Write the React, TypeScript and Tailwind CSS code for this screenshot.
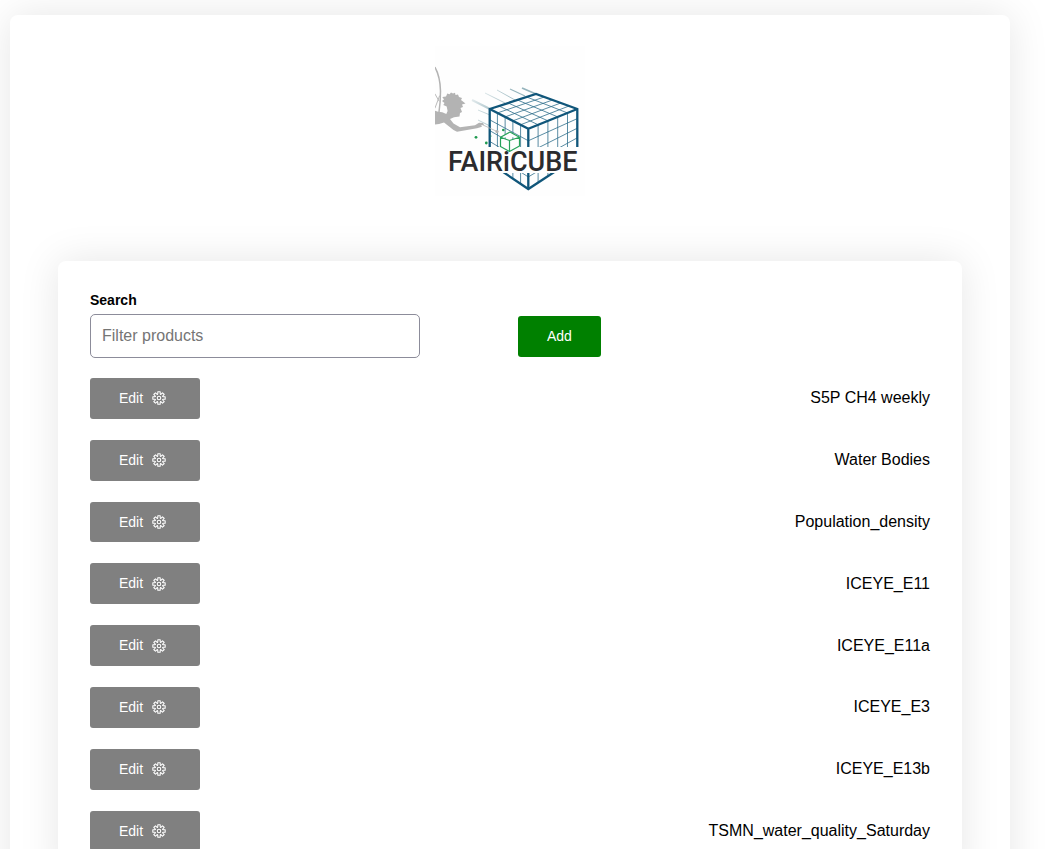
const products = [
  "S5P CH4 weekly",
  "Water Bodies",
  "Population_density",
  "ICEYE_E11",
  "ICEYE_E11a",
  "ICEYE_E3",
  "ICEYE_E13b",
  "TSMN_water_quality_Saturday",
];

type Point = [number, number];

const mix = (a: Point, b: Point, t: number): Point => [
  a[0] + (b[0] - a[0]) * t,
  a[1] + (b[1] - a[1]) * t,
];

/** Grid lines dividing a quadrilateral face into 5 × 5 cells. */
function faceGrid(a: Point, b: Point, c: Point, d: Point): string {
  return [0.2, 0.4, 0.6, 0.8]
    .map((t) => {
      const lines = [
        [mix(a, b, t), mix(d, c, t)],
        [mix(a, d, t), mix(b, c, t)],
      ];
      return lines.map(([p, q]) => `M${p.join(" ")}L${q.join(" ")}`).join("");
    })
    .join("");
}

const back: Point = [101, 48];
const left: Point = [54.7, 63];
const right: Point = [142.3, 63];
const front: Point = [93.3, 82.7];
const bottom: Point = [93.3, 143];
const leftLow: Point = [54.7, 117];
const rightLow: Point = [142.3, 111];

/** Outline of an eight-toothed gear centred in a 24 × 24 box. */
const gearOutline =
  Array.from({ length: 8 }, (_, k) =>
    (
      [
        [8, -15],
        [10.8, -11],
        [10.8, 11],
        [8, 15],
        [6.6, 22.5],
      ] as Point[]
    ).map(([radius, offset]) => {
      const angle = ((k * 45 + offset) * Math.PI) / 180;
      return `${(12 + radius * Math.cos(angle)).toFixed(2)} ${(12 + radius * Math.sin(angle)).toFixed(2)}`;
    }),
  )
    .flat()
    .map((p, i) => (i === 0 ? "M" : "L") + p)
    .join("") + "Z";

function GearIcon() {
  return (
    <svg
      viewBox="0 0 24 24"
      className="size-[14px] shrink-0"
      fill="none"
      stroke="currentColor"
      strokeWidth="1.8"
      strokeLinejoin="round"
      aria-hidden="true"
    >
      <path d={gearOutline} />
      <circle cx="12" cy="12" r="3" />
    </svg>
  );
}

function Logo() {
  return (
    <svg viewBox="0 0 150 150" className="size-[150px]" role="img" aria-label="FAIRiCUBE">
      <defs>
        <linearGradient id="streak" gradientUnits="userSpaceOnUse" x1="38" y1="40" x2="68" y2="60">
          <stop offset="0" stopColor="#4f8290" stopOpacity="0.05" />
          <stop offset="1" stopColor="#4f8290" stopOpacity="0.6" />
        </linearGradient>
      </defs>
      <rect width="150" height="150" fill="#fefefe" />
      <g fill="none" stroke="url(#streak)" strokeWidth="0.8">
        <path d="M87 42L101 48" strokeWidth="1.8" />
        <path d="M75 43L90 50" strokeWidth="1.2" />
        <path d="M62 44L80 54M50 47L70 57M43 64L55 69M43 74L55 80" />
        <path d="M37 54L55 63" strokeWidth="2" />
      </g>
      <g fill="none" stroke="#2f6f8c" strokeWidth="0.8">
        <path d={faceGrid(left, back, right, front)} />
        <path d={faceGrid(left, front, bottom, leftLow)} />
        <path d={faceGrid(front, right, rightLow, bottom)} />
      </g>
      <g fill="none" stroke="#10567a" strokeWidth="2.3" strokeLinejoin="miter">
        <path d="M54.7 63L101 48L142.3 63V111L93.3 143L54.7 117Z" />
        <path d="M54.7 63L93.3 82.7L142.3 63M93.3 82.7V143" />
      </g>
      <g fill="none" stroke="#b3b3b3" strokeLinecap="round">
        <path d="M0 21.500Q5 30 5.500 45Q5.500 56 4 66" strokeWidth="1.5" />
        <path d="M0 48L4 55M0 62L4.500 50" strokeWidth="0.9" />
        <path d="M48 79L61 85" strokeWidth="0.8" />
      </g>
      <g fill="#b3b3b3">
        <path d="M0 64.700L3 65.700L7.300 66.300L11.300 68L12.600 65L11.700 60.500L8.300 59L9.500 57L7 55L9 53.500L7.300 51L11 50.500L12.300 47.500L14.500 48.300L16 46.500L18 47.500L20 46.800L20.500 49L23 48.500L24 51L27 52L26 54L30.500 57.500L27 58.500L28 61L25.500 62L27 66L25 67L24.500 70.500L19 71.200L15 73L18.500 77.500L25 81.300L40 79.300L44 76.800L48 77L49 78.800L46 79.500L47 80.800L42 82.200L32 84L22 85.700L18.500 84L9 76.500L4 78L0 78.500Z" />
        <circle cx="62" cy="85.500" r="1.600" />
      </g>
      <rect x="10" y="101" width="140" height="26" fill="#fefefe" />
      <path
        d="M75 86L84.500 91.300V100L74.500 105.500L65.500 100.500V91.300ZM65.500 91.300L74.500 94.500L84.500 91.300M74.500 94.500V105.500"
        fill="#fefefe"
        stroke="#27a35a"
        strokeWidth="1.2"
        strokeLinejoin="round"
      />
      <g fill="#1f9a50">
        <circle cx="41" cy="91.300" r="1.400" />
        <circle cx="51.300" cy="97" r="1.400" />
        <circle cx="68.300" cy="84" r="1.300" />
        <circle cx="56" cy="90" r="0.600" />
      </g>
      <text
        x="13"
        y="125"
        fill="#2b2b2e"
        fontFamily="Roboto, 'Open Sans', sans-serif"
        fontSize="27"
        fontWeight="500"
      >
        FAIRiCUBE
      </text>
    </svg>
  );
}

export default function App() {
  return (
    <div className="flow-root bg-white font-['Liberation_Sans',Arial,sans-serif] text-base text-black">
      <main className="mt-[15px] mr-[42px] mb-4 ml-[10px] rounded-lg px-12 pt-[31px] pb-12 shadow-[0_0_40px_rgba(0,0,0,0.1)]">
        <header className="flex justify-center pb-[65px]">
          <Logo />
        </header>

        <section className="rounded-lg px-8 pt-[31px] pb-8 shadow-[0_0_40px_rgba(0,0,0,0.1)]">
          <div className="grid grid-cols-2 items-end gap-4">
            <div className="flex flex-col items-start">
              <label htmlFor="search" className="pb-1.5 text-sm leading-4 font-bold">
                Search
              </label>
              <input
                id="search"
                type="search"
                placeholder="Filter products"
                className="h-11 w-4/5 rounded-[5px] border border-[#8c8c9a] bg-white px-[11px] text-base outline-none placeholder:text-[#757575]"
              />
            </div>
            <div className="flex pb-px">
              <button
                type="button"
                className="rounded-[3px] bg-[#008000] px-[29px] py-3 text-sm leading-[1.2] text-white"
              >
                Add
              </button>
            </div>
          </div>

          <ul className="flex flex-col gap-[21px] pt-5">
            {products.map((name) => (
              <li key={name} className="flex items-center justify-between">
                <button
                  type="button"
                  className="flex w-[110px] items-center gap-[9px] rounded-[3px] bg-[#808080] pl-[29px] py-3 text-sm leading-[1.2] text-white"
                >
                  Edit
                  <GearIcon />
                </button>
                <span className="leading-5">{name}</span>
              </li>
            ))}
          </ul>
        </section>
      </main>
    </div>
  );
}
